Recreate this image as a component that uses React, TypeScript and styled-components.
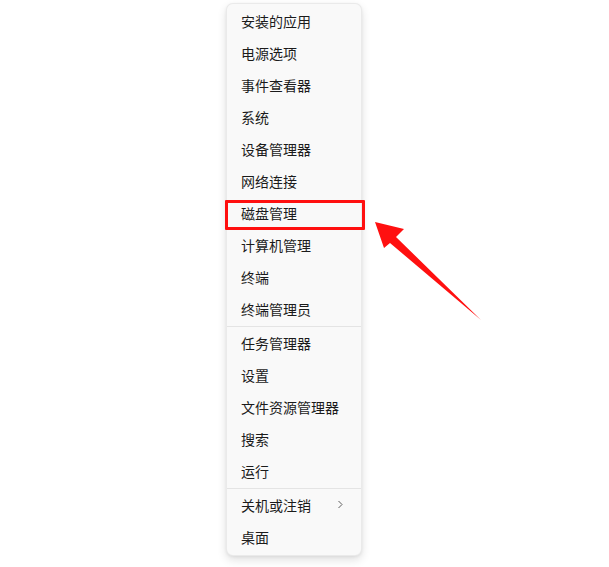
import * as React from "react";
import styled, { createGlobalStyle } from "styled-components";

const GlobalStyle = createGlobalStyle`
  html, body {
    margin: 0;
    padding: 0;
    background: #ffffff;
  }
  body {
    font-family: "Noto Sans CJK SC", "Noto Sans", sans-serif;
  }
`;

interface MenuEntry {
  label: string;
  submenu?: boolean;
  highlighted?: boolean;
}

const groups: MenuEntry[][] = [
  [
    { label: "安装的应用" },
    { label: "电源选项" },
    { label: "事件查看器" },
    { label: "系统" },
    { label: "设备管理器" },
    { label: "网络连接" },
    { label: "磁盘管理", highlighted: true },
    { label: "计算机管理" },
    { label: "终端" },
    { label: "终端管理员" },
  ],
  [
    { label: "任务管理器" },
    { label: "设置" },
    { label: "文件资源管理器" },
    { label: "搜索" },
    { label: "运行" },
  ],
  [{ label: "关机或注销", submenu: true }, { label: "桌面" }],
];

const Page = styled("div")`
  position: relative;
  width: 609px;
  height: 567px;
  padding: 3px 0 0 226px;
  box-sizing: border-box;
  overflow: hidden;
`;

const Menu = styled("div")`
  width: 136px;
  padding: 2px 0 1px;
  box-sizing: border-box;
  background: #f9f9f9;
  border: 1px solid rgba(0, 0, 0, 0.06);
  border-radius: 7px;
  box-shadow: 0 4px 10px rgba(0, 0, 0, 0.12), 0 1px 3px rgba(0, 0, 0, 0.06);
`;

const Group = styled("div")`
  display: flex;
  flex-direction: column;
`;

const Separator = styled("div")`
  height: 1px;
  margin: 0 0 1px;
  background: #e4e4e4;
`;

const Row = styled("div")<{ $highlighted?: boolean }>`
  position: relative;
  height: 32px;
  box-sizing: border-box;
  display: flex;
  align-items: center;
  justify-content: space-between;
  padding: 0 16px 3px 14px;
  font-size: 14px;
  color: #1b1b1b;
  white-space: nowrap;

  ${(p) =>
    p.$highlighted &&
    `
    &::after {
      content: "";
      position: absolute;
      left: -2px;
      right: -4px;
      top: 2px;
      bottom: 0;
      border: 3px solid #ff0f0f;
      border-radius: 1px;
    }
  `}
`;

const Chevron = styled("svg")`
  width: 9px;
  height: 9px;
  color: #5e5e5e;
`;

const Arrow = styled("svg")`
  position: absolute;
  left: 0;
  top: 0;
  pointer-events: none;
`;

const ChevronRight = () => (
  <Chevron viewBox="0 0 9 9" fill="none">
    <path d="M2.5 1 L6 4.5 L2.5 8" stroke="currentColor" strokeWidth="1" />
  </Chevron>
);

export default function App() {
  return (
    <>
      <GlobalStyle />
      <Page>
        <Menu>
          {groups.map((group, gi) => (
            <React.Fragment key={gi}>
              {gi > 0 && <Separator />}
              <Group>
                {group.map((item) => (
                  <Row key={item.label} $highlighted={item.highlighted}>
                    <span>{item.label}</span>
                    {item.submenu && <ChevronRight />}
                  </Row>
                ))}
              </Group>
            </React.Fragment>
          ))}
        </Menu>
        <Arrow width="609" height="567" viewBox="0 0 609 567">
          <polygon
            points="375,222 404,229 396,237 481,320 390,243 384,248"
            fill="#ff1010"
          />
        </Arrow>
      </Page>
    </>
  );
}
